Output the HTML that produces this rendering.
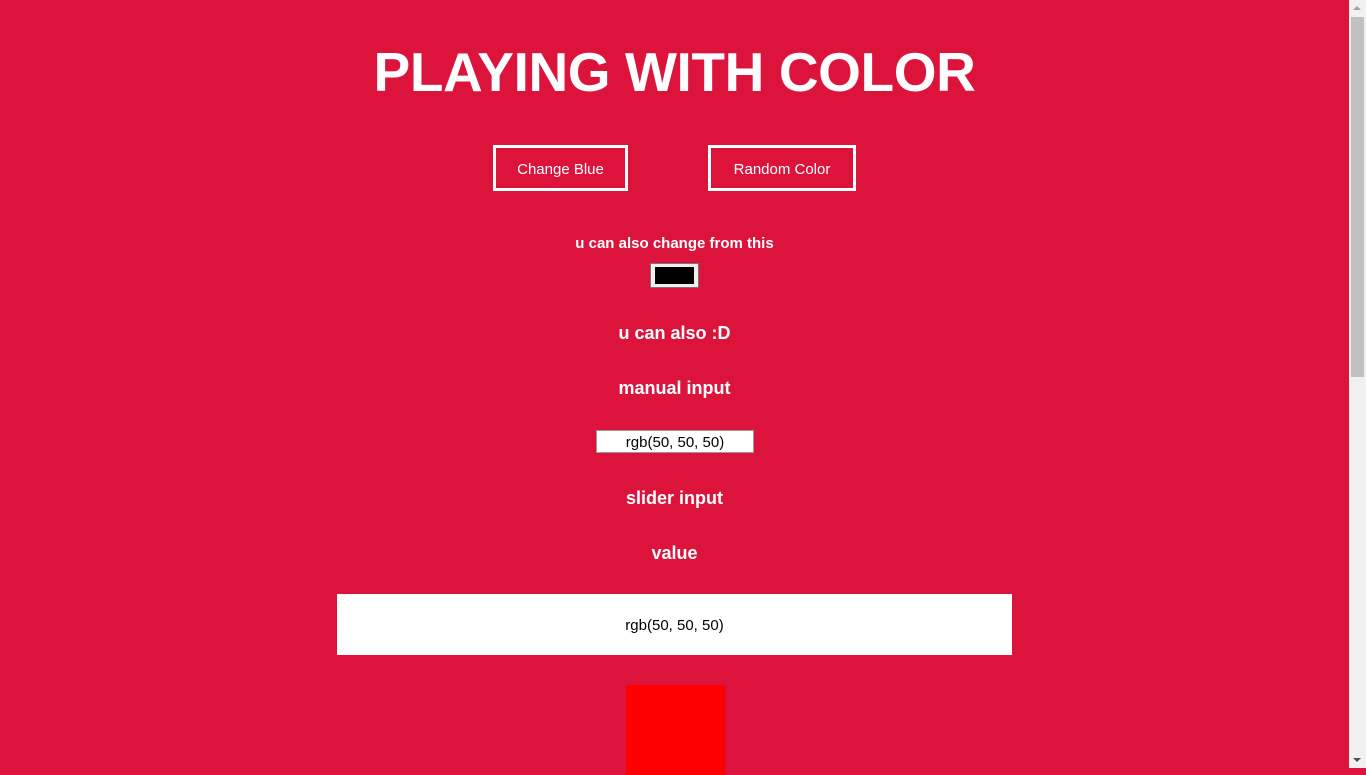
<!DOCTYPE html>
<html><head><meta charset="utf-8"><style>
html,body{margin:0;padding:0;}
body{width:1366px;height:768px;overflow:hidden;background:#dc143c;font-family:"Liberation Sans",sans-serif;color:#fff;position:relative;}
.c{position:absolute;left:0;width:1349px;text-align:center;white-space:nowrap;}
h1{margin:0;font-size:55px;font-weight:bold;letter-spacing:-0.4px;}
.btn{position:absolute;border:3px solid #fff;box-sizing:border-box;color:#fff;font-size:15px;display:flex;align-items:center;justify-content:center;padding-top:2px;}
.b{font-weight:bold;}
#sb{position:absolute;right:0;top:0;width:17px;height:768px;background:#f1f1f1;}
#th{position:absolute;left:2px;top:17px;width:13px;height:360px;background:#c1c1c1;}
</style></head><body>
<div class="c" style="top:40px;"><h1>PLAYING WITH COLOR</h1></div>
<div class="btn" style="left:493px;top:145px;width:135px;height:46px;">Change Blue</div>
<div class="btn" style="left:708px;top:145px;width:148px;height:46px;">Random Color</div>
<div class="c b" style="top:235px;font-size:15px;">u can also change from this</div>
<div style="position:absolute;left:650px;top:263px;width:49px;height:25px;background:#efefef;border:1px solid #767676;box-sizing:border-box;padding:3px 4px;"><div style="width:100%;height:100%;background:#000;"></div></div>
<div class="c b" style="top:323px;font-size:18px;">u can also :D</div>
<div class="c b" style="top:378px;font-size:18px;">manual input</div>
<div style="position:absolute;left:596px;top:430px;width:158px;height:23px;background:#fff;border:1px solid #999;box-sizing:border-box;color:#000;font-size:15px;text-align:center;line-height:23px;">rgb(50, 50, 50)</div>
<div class="c b" style="top:488px;font-size:18px;">slider input</div>
<div class="c b" style="top:543px;font-size:18px;">value</div>
<div style="position:absolute;left:337px;top:594px;width:675px;height:61px;background:#fff;color:#000;font-size:15px;text-align:center;line-height:64px;">rgb(50, 50, 50)</div>
<div style="position:absolute;left:626px;top:685px;width:99px;height:90px;background:#f00;"></div>
<div id="sb"><div id="th"></div>
<div style="position:absolute;left:4px;top:6px;width:0;height:0;border-left:4px solid transparent;border-right:4px solid transparent;border-bottom:4px solid #a3a3a3;"></div>
<div style="position:absolute;left:4px;bottom:6px;width:0;height:0;border-left:4px solid transparent;border-right:4px solid transparent;border-top:4px solid #505050;"></div>
</div>
</body></html>
